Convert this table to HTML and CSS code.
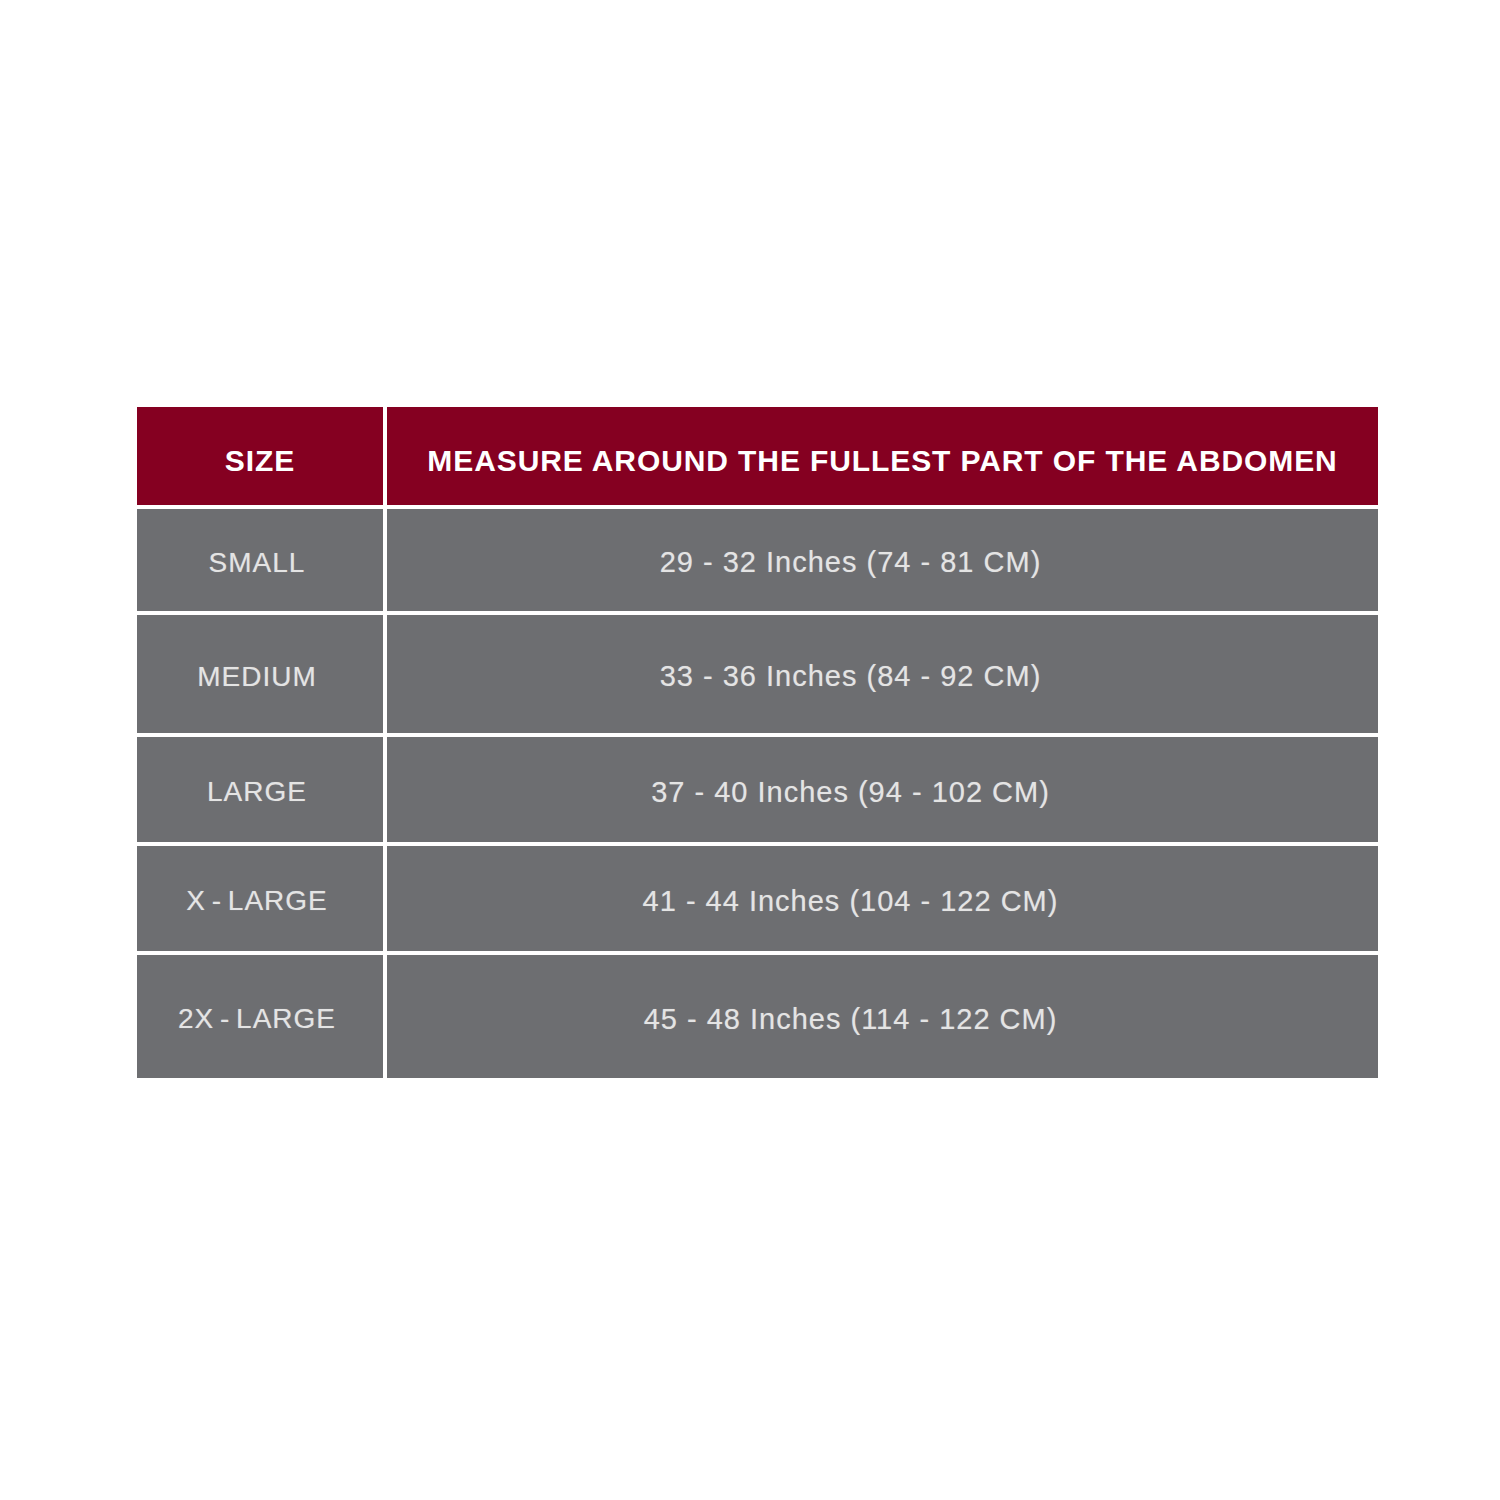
FILE: index.html
```html
<!DOCTYPE html>
<html>
<head>
<meta charset="utf-8">
<link rel="stylesheet" href="styles.css">
</head>
<body>
<div class="page">
  <div class="chart">
    <div class="cell head size">SIZE</div>
    <div class="cell head measure">MEASURE AROUND THE FULLEST PART OF THE ABDOMEN</div>

    <div class="cell body size">SMALL</div>
    <div class="cell body measure">29 - 32 Inches (74 - 81 CM)</div>

    <div class="cell body size">MEDIUM</div>
    <div class="cell body measure">33 - 36 Inches (84 - 92 CM)</div>

    <div class="cell body size">LARGE</div>
    <div class="cell body measure">37 - 40 Inches (94 - 102 CM)</div>

    <div class="cell body size">X - LARGE</div>
    <div class="cell body measure">41 - 44 Inches (104 - 122 CM)</div>

    <div class="cell body size">2X - LARGE</div>
    <div class="cell body measure">45 - 48 Inches (114 - 122 CM)</div>
  </div>
</div>
</body>
</html>
```

FILE: styles.css
```css
html, body {
  margin: 0;
  padding: 0;
  background: #ffffff;
}

.page {
  width: 1500px;
  height: 1500px;
  padding: 407px 0 0 137px;
  box-sizing: border-box;
}

.chart {
  display: grid;
  grid-template-columns: 246px 991px;
  grid-template-rows: 98px 102px 118px 105px 105px 123px;
  column-gap: 4px;
  row-gap: 4px;
  font-family: "Liberation Sans", Arial, sans-serif;
}

.cell {
  display: flex;
  align-items: center;
  justify-content: center;
  box-sizing: border-box;
  white-space: nowrap;
}

.head {
  background: #850021;
  color: #ffffff;
  font-weight: bold;
  font-size: 30px;
  letter-spacing: 0.9px;
  padding-top: 9px;
}

.body {
  background: #6d6e71;
  color: #e4e4e4;
  padding-top: 5px;
  text-shadow: 0 0 1px rgba(255, 255, 255, 0.35);
}

.body.size {
  font-size: 28px;
  letter-spacing: 1px;
  word-spacing: -3px;
  padding-right: 6px;
}

.body.measure {
  font-size: 29px;
  letter-spacing: 1px;
  padding-right: 64px;
}
```
